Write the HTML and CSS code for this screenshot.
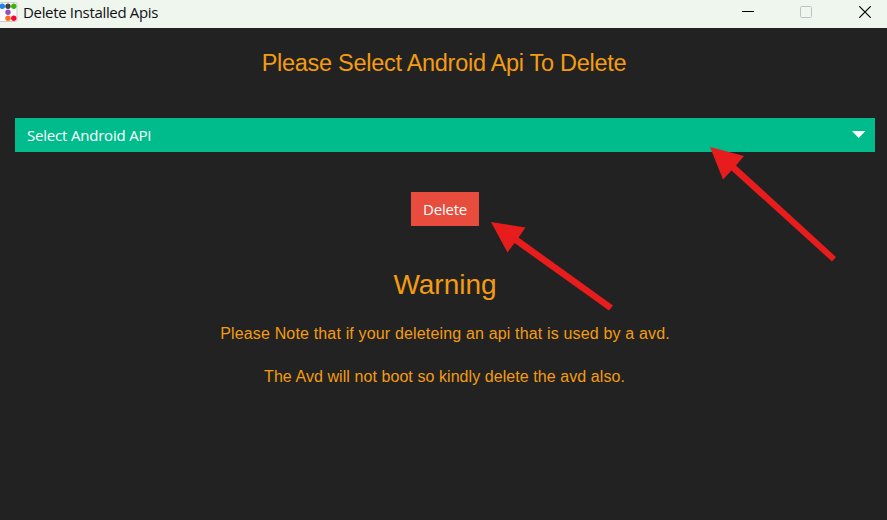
FILE: index.html
```
<!DOCTYPE html>
<html lang="en">
<head>
<meta charset="utf-8">
<title>Delete Installed Apis</title>
<link rel="stylesheet" href="styles.css">
</head>
<body>
<header class="titlebar">
  <svg class="logo" width="18" height="22" viewBox="0 0 18 22">
    <rect x="-2" y="2.5" width="19" height="19" rx="1.5" fill="#fff" stroke="#c9cdca"/>
    <circle cx="2.3" cy="6.3" r="2.7" fill="#2482e8"/>
    <circle cx="8" cy="6.3" r="2.7" fill="#404448"/>
    <circle cx="13.8" cy="6.3" r="2.7" fill="#3bb30b"/>
    <circle cx="8" cy="12.3" r="2.7" fill="#9850b8"/>
    <circle cx="8" cy="18.3" r="2.7" fill="#ff7019"/>
    <circle cx="13.8" cy="18.3" r="2.7" fill="#fc0535"/>
  </svg>
  <span class="caption">Delete Installed Apis</span>
  <div class="controls">
    <svg width="12" height="12" viewBox="0 0 12 12"><path d="M0 5.5H12" stroke="#000"/></svg>
    <svg width="12" height="12" viewBox="0 0 12 12"><rect x=".5" y=".5" width="11" height="11" rx="1" fill="none" stroke="#bdc3be"/></svg>
    <svg class="close" width="12" height="12" viewBox="0 0 12 12"><path d="M.3.3L11.7 11.7M11.7.3L.3 11.7" stroke="#000" stroke-width="1.2"/></svg>
  </div>
</header>
<main class="content">
  <h1 class="heading"><span>Please Select Android Api To Delete</span></h1>
  <button class="select"><span>Select Android API</span>
    <svg class="caret" width="14" height="8" viewBox="0 0 14 8"><path d="M0 0H13.4L6.7 7Z" fill="#fff"/></svg>
  </button>
  <button class="delete"><span>Delete</span></button>
  <h2 class="warning">Warning</h2>
  <p class="note">Please Note that if your deleteing an api that is used by a avd.</p>
  <p class="note second">The Avd will not boot so kindly delete the avd also.</p>
</main>
<svg class="arrows" width="887" height="520" viewBox="0 0 887 520" fill="#e71c1c">
  <path d="M710 147L744 156L736 165.500L836 257L832 261.500L731.500 170.500L723 179.500Z"/>
  <path d="M491 222L525.500 227.500L518.500 237.500L613 305.500L609 310.500L514.500 243L507.500 252.500Z"/>
</svg>
</body>
</html>
```
FILE: styles.css
```
* { box-sizing: border-box; }
body {
  margin: 0;
  height: 520px;
  overflow: hidden;
  background: #222;
  color: #f39c12;
  font-family: "Liberation Sans", Arial, sans-serif;
}
.titlebar {
  display: flex;
  height: 28px;
  background: #eef6ee;
  color: #111;
}
.titlebar svg { display: block; }
.caption {
  margin-left: 5px;
  font: 15px/24px "Open Sans", sans-serif;
  letter-spacing: -0.33px;
  white-space: nowrap;
}
.controls {
  display: flex;
  gap: 46px;
  margin: 6px 16px 0 auto;
}
.close { margin-left: 1px; }
.content {
  display: flex;
  flex-direction: column;
  align-items: center;
  padding: 0 12px 0 15px;
}
.heading {
  margin: 20px 0 0;
  padding-right: 2px;
  font-size: 23.500px;
  font-weight: 400;
  line-height: 30px;
  letter-spacing: -0.28px;
  white-space: nowrap;
}
.select, .delete {
  height: 34px;
  border: 0;
  padding: 1px 12px 0;
  color: #fff;
  font: 15px/33px "Open Sans", sans-serif;
  letter-spacing: -0.2px;
}
.select {
  display: flex;
  align-items: center;
  justify-content: space-between;
  align-self: stretch;
  margin-top: 40px;
  padding-right: 9px;
  background: #00bc8c;
}
.caret { margin-bottom: 2px; }
.delete {
  width: 68px;
  margin-top: 40px;
  background: #e74c3c;
}
.warning {
  margin: 43px 0 0;
  font-size: 28px;
  font-weight: 400;
  line-height: 32px;
}
.note {
  margin: 23px 0 0;
  font-size: 16px;
  line-height: 20px;
  letter-spacing: 0.16px;
  white-space: nowrap;
}
.second {
  margin-top: 23px;
  padding-right: 1px;
  letter-spacing: 0.07px;
}
.arrows {
  position: absolute;
  inset: 0;
  pointer-events: none;
}
```
